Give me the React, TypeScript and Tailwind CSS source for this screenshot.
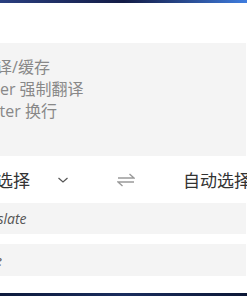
import React from 'react';

function Chevron() {
  return (
    <svg width="12" height="8" viewBox="0 0 12 8" className="shrink-0">
      <path d="M1.5 2 L6 6 L10.5 2" fill="none" stroke="#555" strokeWidth="1.2" />
    </svg>
  );
}

function SwapIcon() {
  return (
    <svg width="18" height="14" viewBox="0 0 18 14" className="shrink-0">
      <path d="M1 5 H17 L12.5 1" fill="none" stroke="#9a9a9a" strokeWidth="1.4" />
      <path d="M17 9 H1 L5.5 13" fill="none" stroke="#9a9a9a" strokeWidth="1.4" />
    </svg>
  );
}

export default function App() {
  return (
    <div className="w-[247px] h-[296px] overflow-hidden bg-white flex flex-col font-['Noto_Sans_CJK_SC',sans-serif]">
      <div className="h-[3px] shrink-0 bg-gradient-to-r from-[#2a3f80] via-[#131c46] to-[#3f7ddf]" />
      <div className="h-[40px] shrink-0" />

      {/* input area */}
      <div className="h-[113px] shrink-0 w-[246px] bg-[#f4f4f4] overflow-hidden">
        <div className="pt-[13px] text-[16px] leading-[22px] text-[#888] whitespace-nowrap font-['Open_Sans','Noto_Sans_CJK_SC',sans-serif]">
          <div className="ml-[-64px]">Enter 翻译/缓存</div>
          <div className="ml-[-60px]">Ctrl+Enter 强制翻译</div>
          <div className="ml-[-62px]">Shift+Enter  换行</div>
        </div>
      </div>

      {/* language selects */}
      <div className="h-[47px] shrink-0 flex items-center whitespace-nowrap text-[17px] text-[#333]">
        <span className="ml-[-38px]">自动选择</span>
        <span className="ml-[27px]">
          <Chevron />
        </span>
        <span className="ml-[48px]">
          <SwapIcon />
        </span>
        <span className="ml-[48px]">自动选择</span>
      </div>

      {/* result boxes */}
      <div className="h-[31px] shrink-0 w-[246px] bg-[#f4f4f4] flex items-center overflow-hidden whitespace-nowrap">
        <span className="ml-[-31px] text-[14px] italic text-[#555] font-['Open_Sans',sans-serif]">Translate</span>
      </div>
      <div className="h-[10px] shrink-0" />
      <div className="h-[32px] shrink-0 w-[246px] bg-[#f4f4f4] flex items-center overflow-hidden whitespace-nowrap">
        <span className="ml-[-41px] text-[14px] italic text-[#555] font-['Open_Sans',sans-serif]">Google</span>
      </div>

      <div className="flex-1" />
      <div className="h-[3px] shrink-0 bg-gradient-to-r from-[#0d1a3c] via-[#1a2d5e] to-[#0c1736]" />
    </div>
  );
}
